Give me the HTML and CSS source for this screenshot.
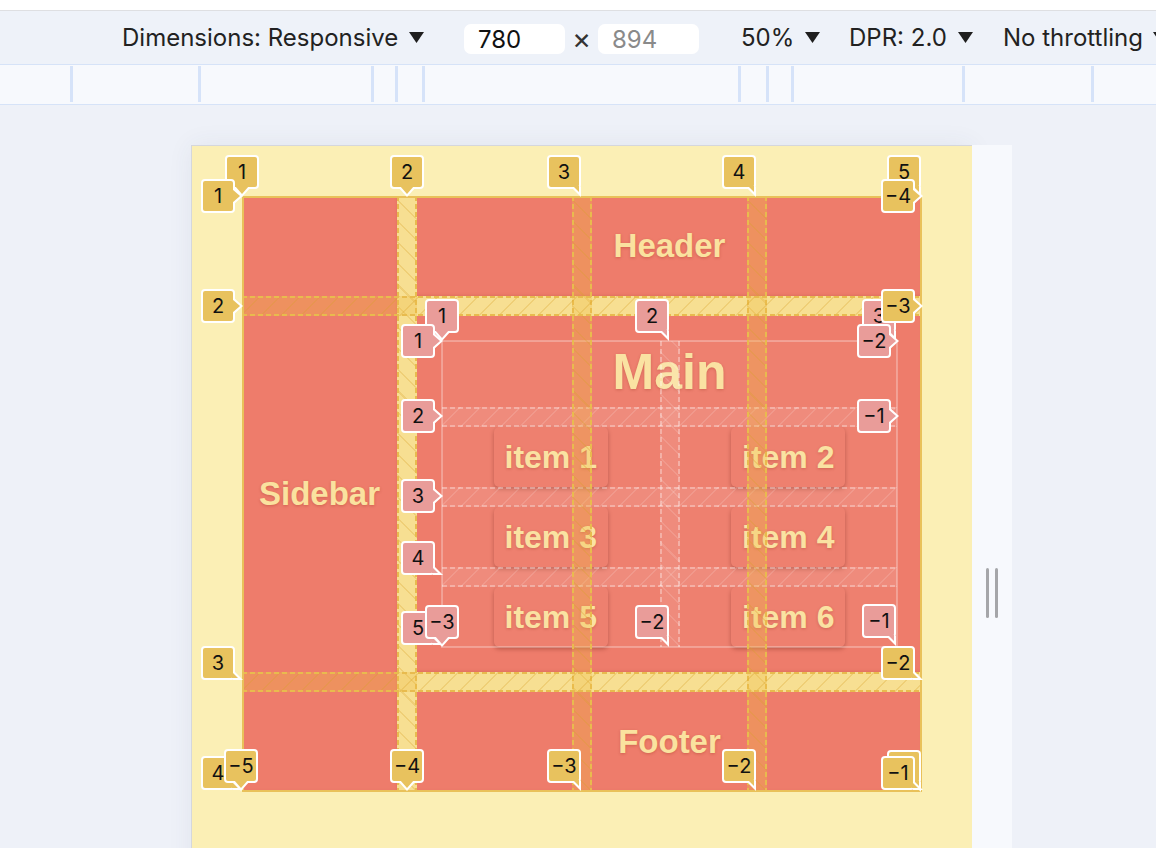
FILE: index.html
```html
<!DOCTYPE html>
<html lang="en">
<head>
<meta charset="utf-8">
<title>Responsive design mode – grid inspector</title>
<link rel="stylesheet" href="styles.css">
</head>
<body>
<div class="topbar"></div>
<div class="toolbar">
  <div class="g g-dim"><span>Dimensions: Responsive</span><svg class="tri" viewBox="0 0 15 11"><path d="M0 0H15L7.5 11Z"/></svg></div>
  <div class="inp">780</div>
  <div class="times">×</div>
  <div class="inp muted">894</div>
  <div class="g g-zoom"><span>50%</span><svg class="tri" viewBox="0 0 15 11"><path d="M0 0H15L7.5 11Z"/></svg></div>
  <div class="g g-dpr"><span>DPR: 2.0</span><svg class="tri" viewBox="0 0 15 11"><path d="M0 0H15L7.5 11Z"/></svg></div>
  <div class="g g-thr"><span>No throttling</span><svg class="tri" viewBox="0 0 15 11"><path d="M0 0H15L7.5 11Z"/></svg></div>
</div>
<div class="ruler"></div>
<div class="stage">
  <div class="frame">
    <div class="grid">
      <div class="area sidebar">Sidebar</div>
      <div class="area header">Header</div>
      <div class="area main">
        <div class="main-title">Main</div>
        <div class="item">item 1</div>
        <div class="item">item 2</div>
        <div class="item">item 3</div>
        <div class="item">item 4</div>
        <div class="item">item 5</div>
        <div class="item">item 6</div>
        <div class="iov">
          <div class="band v ic2"></div>
          <div class="band h ir2"></div>
          <div class="band h ir4"></div>
          <div class="band h ir6"></div>
        </div>
      </div>
      <div class="area footer">Footer</div>
      <div class="oov">
        <div class="band v oc2"></div>
        <div class="band v oc4"></div>
        <div class="band v oc6"></div>
        <div class="band h or2"></div>
        <div class="band h or4"></div>
      </div>
      <div class="labels">
        <div class="lbl pink p-b it1">1</div>
        <div class="lbl pink p-br it2">2</div>
        <div class="lbl pink p-br it3">3</div>
        <div class="lbl pink p-r il1">1</div>
        <div class="lbl pink p-r il2">2</div>
        <div class="lbl pink p-r il3">3</div>
        <div class="lbl pink p-rb il4">4</div>
        <div class="lbl pink p-rb il5">5</div>
        <div class="lbl pink p-b ib3">−3</div>
        <div class="lbl pink p-br ib2">−2</div>
        <div class="lbl pink p-br ib1">−1</div>
        <div class="lbl pink p-r ir2l">−2</div>
        <div class="lbl pink p-r ir1l">−1</div>

        <div class="lbl gold p-b ct1">1</div>
        <div class="lbl gold p-b ct2">2</div>
        <div class="lbl gold p-br ct3">3</div>
        <div class="lbl gold p-br ct4">4</div>
        <div class="lbl gold p-br ct5">5</div>
        <div class="lbl gold p-r rl1">1</div>
        <div class="lbl gold p-r rl2">2</div>
        <div class="lbl gold p-rb rl3">3</div>
        <div class="lbl gold p-rb rl4">4</div>
        <div class="lbl gold p-b cb5">−5</div>
        <div class="lbl gold p-b cb4">−4</div>
        <div class="lbl gold p-br cb3">−3</div>
        <div class="lbl gold p-br cb2">−2</div>
        <div class="lbl gold p-br cb1">−1</div>
        <div class="lbl gold p-r rr4">−4</div>
        <div class="lbl gold p-r rr3">−3</div>
        <div class="lbl gold p-rb rr2">−2</div>
        <div class="lbl gold p-rb rr1">−1</div>
      </div>
    </div>
  </div>
  <div class="strip"><div class="bar"></div><div class="bar"></div></div>
</div>
</body>
</html>
```

FILE: styles.css
```css
html, body {
  margin: 0;
  height: 100%;
  overflow: hidden;
}
body {
  background: #eef1f8;
  font-family: Inter, "Liberation Sans", sans-serif;
}

/* ---------- top chrome ---------- */
.topbar {
  height: 10px;
  background: #ffffff;
  border-bottom: 1px solid #dedfe2;
}
.toolbar {
  height: 53px;
  background: #eef2f9;
  display: flex;
  align-items: center;
  padding-left: 122px;
  font-size: 24px;
  color: #222222;
  white-space: nowrap;
  overflow: hidden;
}
.g {
  display: flex;
  align-items: center;
  gap: 11px;
  flex: none;
}
.g-dim { width: 342px; }
.g-zoom { width: 108px; margin-left: 42px; }
.g-dpr { width: 154px; }
.g-thr { width: 200px; gap: 10px; }
.tri {
  width: 15px;
  height: 11px;
  fill: #1f1f1f;
  flex: none;
}
.inp {
  flex: none;
  width: 101px;
  height: 30px;
  box-sizing: border-box;
  background: #ffffff;
  border-radius: 7px;
  padding-left: 14px;
  display: flex;
  align-items: center;
  margin-top: 3px;
  color: #111111;
}
.inp.muted { color: #8a8a8a; }
.times {
  flex: none;
  width: 33px;
  text-align: center;
  font-size: 29px;
  color: #333333;
  margin-top: 2px;
}

.ruler {
  height: 39px;
  border-top: 1px solid #d6e3f8;
  border-bottom: 1px solid #d6e3f8;
  background:
    linear-gradient(#d6e3f9, #d6e3f9) 70px 1px / 3px 36px no-repeat,
    linear-gradient(#d6e3f9, #d6e3f9) 198px 1px / 3px 36px no-repeat,
    linear-gradient(#d6e3f9, #d6e3f9) 371px 1px / 3px 36px no-repeat,
    linear-gradient(#d6e3f9, #d6e3f9) 395px 1px / 3px 36px no-repeat,
    linear-gradient(#d6e3f9, #d6e3f9) 422px 1px / 3px 36px no-repeat,
    linear-gradient(#d6e3f9, #d6e3f9) 738px 1px / 3px 36px no-repeat,
    linear-gradient(#d6e3f9, #d6e3f9) 766px 1px / 3px 36px no-repeat,
    linear-gradient(#d6e3f9, #d6e3f9) 791px 1px / 3px 36px no-repeat,
    linear-gradient(#d6e3f9, #d6e3f9) 962px 1px / 3px 36px no-repeat,
    linear-gradient(#d6e3f9, #d6e3f9) 1091px 1px / 3px 36px no-repeat,
    #f7f9fd;
}

/* ---------- stage ---------- */
.stage {
  display: flex;
  align-items: flex-start;
  padding: 40px 0 0 191px;
}
.frame {
  flex: none;
  width: 780px;
  height: 844px;
  padding-top: 50px;
  background: #fbefb5;
  border-left: 1px solid #d5d7dc;
  border-top: 1px solid #d5d7dc;
  box-shadow: 0 0 24px rgba(60, 70, 100, 0.07);
}
.strip {
  flex: none;
  width: 40px;
  height: 895px;
  background: #f7f9fd;
  display: flex;
  align-items: center;
  justify-content: center;
  gap: 6px;
}
.bar {
  width: 3px;
  height: 50px;
  background: #a5a6a9;
  border-radius: 2px;
}

/* ---------- page grid ---------- */
.grid {
  position: relative;
  width: 680px;
  height: 596px;
  margin: 0 auto;
  display: grid;
  grid-template-columns: repeat(4, 1fr);
  grid-template-rows: 100px 1fr 100px;
  gap: 20px;
}
.area {
  background: #ee7c6b;
  color: #fae29f;
  font: bold 33px "Liberation Sans", Arial, sans-serif;
  display: flex;
  align-items: center;
  justify-content: center;
  text-shadow: 0 1px 3px rgba(140, 40, 20, 0.3);
  box-shadow: inset -2px -3px 3px -2px rgba(120, 30, 20, 0.12);
}
.sidebar { grid-column: 1; grid-row: 1 / 4; }
.header { grid-column: 2 / 5; grid-row: 1; }
.footer { grid-column: 2 / 5; grid-row: 3; }
.main {
  grid-column: 2 / 5;
  grid-row: 2;
  position: relative;
  display: grid;
  grid-template-columns: 1fr 1fr;
  grid-template-rows: 1fr;
  grid-auto-rows: 60px;
  gap: 20px;
  padding: 25px;
  justify-items: center;
  align-items: stretch;
}
.main-title {
  grid-column: 1 / -1;
  font-size: 50px;
  display: flex;
  align-items: center;
  margin-top: -4px;
}
.item {
  font-size: 32px;
  padding: 0 11px;
  display: flex;
  align-items: center;
  border-radius: 5px;
  box-shadow: 0 2px 4px rgba(90, 20, 10, 0.35);
}

/* ---------- grid overlays ---------- */
.oov, .iov {
  position: absolute;
  display: grid;
  pointer-events: none;
}
.oov {
  inset: 0;
  grid-template-columns: 1fr 20px 1fr 20px 1fr 20px 1fr;
  grid-template-rows: 100px 20px 1fr 20px 100px;
  outline: 2px solid #e9c15a;
  outline-offset: -2px;
}
.iov {
  inset: 25px;
  grid-template-columns: 1fr 20px 1fr;
  grid-template-rows: 1fr 20px 60px 20px 60px 20px 60px;
  outline: 2px solid rgba(255, 255, 255, 0.28);
  outline-offset: -1px;
  background: rgba(255, 255, 255, 0.03);
}
.oov .band {
  --line: #e8bb4e;
  --hatch: rgba(215, 160, 40, 0.26);
  --fill: rgba(238, 190, 70, 0.32);
}
.iov .band {
  --line: rgba(255, 255, 255, 0.32);
  --hatch: rgba(255, 255, 255, 0.12);
  --fill: rgba(255, 255, 255, 0.09);
}
.band.v {
  grid-row: 1 / -1;
  background:
    repeating-linear-gradient(180deg, var(--line) 0 5px, transparent 5px 8px) left top / 2px 100% no-repeat,
    repeating-linear-gradient(180deg, var(--line) 0 5px, transparent 5px 8px) right top / 2px 100% no-repeat,
    repeating-linear-gradient(45deg, transparent 0 13.5px, var(--hatch) 13.5px 15px),
    var(--fill);
}
.band.h {
  grid-column: 1 / -1;
  background:
    repeating-linear-gradient(90deg, var(--line) 0 5px, transparent 5px 8px) left top / 100% 2px no-repeat,
    repeating-linear-gradient(90deg, var(--line) 0 5px, transparent 5px 8px) left bottom / 100% 2px no-repeat,
    repeating-linear-gradient(135deg, transparent 0 12.5px, var(--hatch) 12.5px 14px),
    var(--fill);
}
.oc2 { grid-column: 2; }
.oc4 { grid-column: 4; }
.oc6 { grid-column: 6; }
.or2 { grid-row: 2; }
.or4 { grid-row: 4; }
.ic2 { grid-column: 2; }
.ir2 { grid-row: 2; }
.ir4 { grid-row: 4; }
.ir6 { grid-row: 6; }

/* ---------- line number labels ---------- */
.labels {
  position: absolute;
  inset: 0;
  pointer-events: none;
}
.lbl {
  position: absolute;
  width: 34px;
  height: 34px;
  box-sizing: border-box;
  border: 2px solid #ffffff;
  border-radius: 4px;
  background: var(--c);
  display: flex;
  align-items: center;
  justify-content: center;
  font: 20px Inter, "Noto Sans", sans-serif;
  color: #111111;
}
.gold { --c: #e8c25e; }
.pink { --c: #e99c99; }
.lbl::before, .lbl::after {
  content: "";
  position: absolute;
}
.lbl::before { background: #ffffff; }
.lbl::after { background: var(--c); }

.p-b::before { left: 6px; top: 30px; width: 18px; height: 10px; clip-path: polygon(0 0, 100% 0, 50% 100%); }
.p-b::after { left: 8px; top: 29px; width: 14px; height: 8px; clip-path: polygon(0 0, 100% 0, 50% 100%); }
.p-br::before { left: 22px; top: 30px; width: 10px; height: 10px; clip-path: polygon(0 0, 100% 0, 100% 100%); }
.p-br::after { left: 24px; top: 29px; width: 6px; height: 6px; clip-path: polygon(0 0, 100% 0, 100% 100%); }
.p-rb::before { left: 30px; top: 22px; width: 10px; height: 10px; clip-path: polygon(0 0, 100% 100%, 0 100%); }
.p-rb::after { left: 29px; top: 24px; width: 6px; height: 6px; clip-path: polygon(0 0, 100% 100%, 0 100%); }
.p-r::before { left: 30px; top: 6px; width: 10px; height: 18px; clip-path: polygon(0 0, 100% 50%, 0 100%); }
.p-r::after { left: 29px; top: 8px; width: 8px; height: 14px; clip-path: polygon(0 0, 100% 50%, 0 100%); }

/* inner (main) grid labels */
.it1 { left: 183px; top: 103px; }
.it2 { left: 393px; top: 103px; }
.it3 { left: 620px; top: 103px; }
.il1 { left: 159px; top: 128px; }
.il2 { left: 159px; top: 203px; }
.il3 { left: 159px; top: 283px; }
.il4 { left: 159px; top: 345px; }
.il5 { left: 159px; top: 415px; }
.ib3 { left: 183px; top: 409px; }
.ib2 { left: 393px; top: 409px; }
.ib1 { left: 620px; top: 408px; }
.ir2l { left: 615px; top: 128px; }
.ir1l { left: 615px; top: 203px; }

/* outer grid labels */
.ct1 { left: -17px; top: -41px; }
.ct2 { left: 148px; top: -41px; }
.ct3 { left: 305px; top: -41px; }
.ct4 { left: 480px; top: -41px; }
.ct5 { left: 645px; top: -41px; }
.rl1 { left: -41px; top: -17px; }
.rl2 { left: -41px; top: 93px; }
.rl3 { left: -41px; top: 450px; }
.rl4 { left: -41px; top: 560px; }
.cb5 { left: -18px; top: 553px; }
.cb4 { left: 148px; top: 553px; }
.cb3 { left: 305px; top: 553px; }
.cb2 { left: 480px; top: 553px; }
.cb1 { left: 645px; top: 554px; }
.rr4 { left: 639px; top: -17px; }
.rr3 { left: 639px; top: 93px; }
.rr2 { left: 639px; top: 450px; }
.rr1 { left: 639px; top: 560px; }
```
